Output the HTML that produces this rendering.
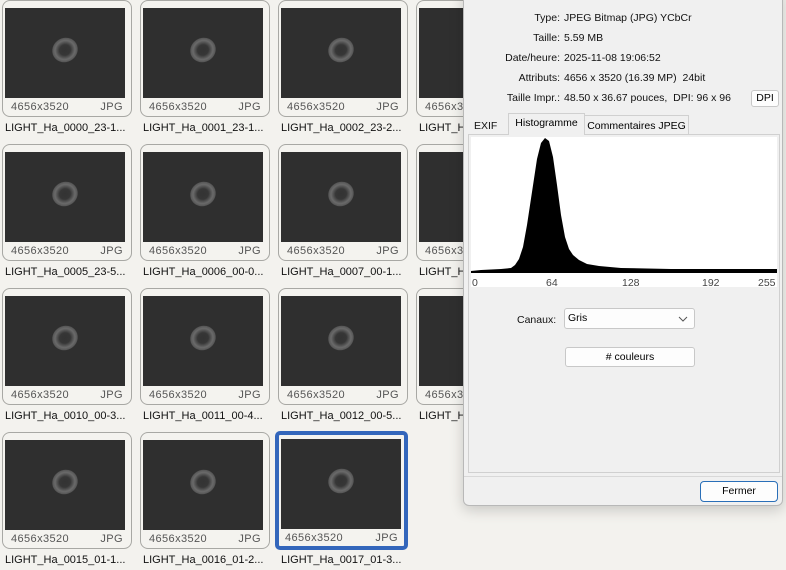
<!DOCTYPE html>
<html><head><meta charset="utf-8"><style>
*{box-sizing:border-box;margin:0;padding:0}
body{width:786px;height:570px;overflow:hidden;background:#f3f2ee;font-family:"Liberation Sans",sans-serif;position:relative}
.tile{position:absolute;width:130px;height:117px;border:1px solid #a8a8a4;border-radius:8px;background:#f4f3ef}
.tile .img{position:absolute;left:2px;top:7px;width:120px;height:90px;background:#2f2f2f;overflow:hidden}
.tile .img::after{content:"";position:absolute;left:47px;top:30px;width:26px;height:24px;border-radius:50%;background:radial-gradient(ellipse at center,#333 0,#363636 30%,#6a6a6a 55%,#4a4a4a 78%,rgba(47,47,47,0) 100%);transform:rotate(-30deg)}
.tile .dim{position:absolute;left:8px;top:100px;font-size:11px;color:#555;letter-spacing:.4px}
.tile .ext{position:absolute;right:8px;top:100px;font-size:11px;color:#555;letter-spacing:.4px}
.name{position:absolute;font-size:11px;color:#111;white-space:nowrap}
.sel{border:4px solid #3366bb;border-radius:5px}
.sel .img{left:2px;top:4px}
.sel .dim{top:97px;left:6px}.sel .ext{top:97px;right:6px}
#dlg{position:absolute;left:463px;top:-10px;width:320px;height:516px;background:#f0f0f0;border:1px solid #b8b8b8;border-radius:0 0 6px 6px;box-shadow:0 4px 14px rgba(0,0,0,.18)}
.lbl{position:absolute;font-size:10.5px;color:#111;white-space:nowrap}
.r{text-align:right;width:96px;left:0}
.v{left:100px}
</style></head><body>
<div class="tile" style="left:2px;top:0"><div class="img"></div><span class="dim">4656x3520</span><span class="ext">JPG</span></div>
<div class="tile" style="left:140px;top:0"><div class="img"></div><span class="dim">4656x3520</span><span class="ext">JPG</span></div>
<div class="tile" style="left:278px;top:0"><div class="img"></div><span class="dim">4656x3520</span><span class="ext">JPG</span></div>
<div class="tile" style="left:416px;top:0"><div class="img"></div><span class="dim">4656x3520</span><span class="ext">JPG</span></div>
<div class="tile" style="left:2px;top:144px"><div class="img"></div><span class="dim">4656x3520</span><span class="ext">JPG</span></div>
<div class="tile" style="left:140px;top:144px"><div class="img"></div><span class="dim">4656x3520</span><span class="ext">JPG</span></div>
<div class="tile" style="left:278px;top:144px"><div class="img"></div><span class="dim">4656x3520</span><span class="ext">JPG</span></div>
<div class="tile" style="left:416px;top:144px"><div class="img"></div><span class="dim">4656x3520</span><span class="ext">JPG</span></div>
<div class="tile" style="left:2px;top:288px"><div class="img"></div><span class="dim">4656x3520</span><span class="ext">JPG</span></div>
<div class="tile" style="left:140px;top:288px"><div class="img"></div><span class="dim">4656x3520</span><span class="ext">JPG</span></div>
<div class="tile" style="left:278px;top:288px"><div class="img"></div><span class="dim">4656x3520</span><span class="ext">JPG</span></div>
<div class="tile" style="left:416px;top:288px"><div class="img"></div><span class="dim">4656x3520</span><span class="ext">JPG</span></div>
<div class="tile" style="left:2px;top:432px"><div class="img"></div><span class="dim">4656x3520</span><span class="ext">JPG</span></div>
<div class="tile" style="left:140px;top:432px"><div class="img"></div><span class="dim">4656x3520</span><span class="ext">JPG</span></div>
<div class="tile sel" style="left:275px;top:431px;width:133px;height:119px"><div class="img"></div><span class="dim">4656x3520</span><span class="ext">JPG</span></div>

<div class="name" style="left:5px;top:122px">LIGHT_Ha_0000_23-1...</div>
<div class="name" style="left:143px;top:122px">LIGHT_Ha_0001_23-1...</div>
<div class="name" style="left:281px;top:122px">LIGHT_Ha_0002_23-2...</div>
<div class="name" style="left:419px;top:122px">LIGHT_Ha</div>
<div class="name" style="left:5px;top:266px">LIGHT_Ha_0005_23-5...</div>
<div class="name" style="left:143px;top:266px">LIGHT_Ha_0006_00-0...</div>
<div class="name" style="left:281px;top:266px">LIGHT_Ha_0007_00-1...</div>
<div class="name" style="left:419px;top:266px">LIGHT_Ha</div>
<div class="name" style="left:5px;top:410px">LIGHT_Ha_0010_00-3...</div>
<div class="name" style="left:143px;top:410px">LIGHT_Ha_0011_00-4...</div>
<div class="name" style="left:281px;top:410px">LIGHT_Ha_0012_00-5...</div>
<div class="name" style="left:419px;top:410px">LIGHT_Ha</div>
<div class="name" style="left:5px;top:554px">LIGHT_Ha_0015_01-1...</div>
<div class="name" style="left:143px;top:554px">LIGHT_Ha_0016_01-2...</div>
<div class="name" style="left:281px;top:554px">LIGHT_Ha_0017_01-3...</div>

<div id="dlg">
  <div class="lbl r" style="top:21px">Type:</div><div class="lbl v" style="top:21px">JPEG Bitmap (JPG) YCbCr</div>
  <div class="lbl r" style="top:41px">Taille:</div><div class="lbl v" style="top:41px">5.59 MB</div>
  <div class="lbl r" style="top:61px">Date/heure:</div><div class="lbl v" style="top:61px">2025-11-08 19:06:52</div>
  <div class="lbl r" style="top:81px">Attributs:</div><div class="lbl v" style="top:81px">4656 x 3520 (16.39 MP)&nbsp; 24bit</div>
  <div class="lbl r" style="top:101px">Taille Impr.:</div><div class="lbl v" style="top:101px">48.50 x 36.67 pouces,&nbsp; DPI: 96 x 96</div>
  <div style="position:absolute;left:287px;top:99px;width:28px;height:17px;border:1px solid #c8c8c8;border-radius:3px;background:#fdfdfd;font-size:10.5px;text-align:center;line-height:15px">DPI</div>
  <div style="position:absolute;left:4px;top:143px;width:312px;height:339px;border:1px solid #d0d0d0;background:#f0f0f0"></div>
  <div class="lbl" style="left:10px;top:129px">EXIF</div>
  <div style="position:absolute;left:44px;top:122px;width:77px;height:22px;border:1px solid #d0d0d0;border-bottom:none;background:#f0f0f0;font-size:10.5px;text-align:center;line-height:19px">Histogramme</div>
  <div style="position:absolute;left:121px;top:124px;width:104px;height:20px;border:1px solid #d0d0d0;border-bottom:none;border-left:none;font-size:10.5px;text-align:center;line-height:20px">Commentaires JPEG</div>
  <div style="position:absolute;left:7px;top:146px;width:306px;height:150px;background:#fff">
    <svg width="306" height="150" style="position:absolute;left:0;top:0">
      <path d="M0 134 L10 133 L30 132 L40 131 L44 128 L48 122 L52 110 L56 88 L61 55 L66 22 L70 6 L74 1 L78 4 L82 20 L86 48 L90 78 L94 100 L98 112 L102 118 L108 123 L116 127 L128 129 L150 131 L200 132 L306 132 L306 136 L0 136Z" fill="#000"/>
      <g font-family="Liberation Sans,sans-serif" font-size="10.5" fill="#444">
        <text x="1" y="149">0</text><text x="75" y="149">64</text><text x="151" y="149">128</text><text x="231" y="149">192</text><text x="287" y="149">255</text>
      </g>
    </svg>
  </div>
  <div class="lbl" style="left:53px;top:323px">Canaux:</div>
  <div style="position:absolute;left:100px;top:317px;width:131px;height:21px;border:1px solid #c8c8c8;border-radius:3px;background:#fdfdfd;font-size:10.5px;line-height:19px;padding-left:3px">Gris<svg width="10" height="6" style="position:absolute;right:6px;top:7px"><path d="M1 1 L5 5 L9 1" stroke="#555" fill="none"/></svg></div>
  <div style="position:absolute;left:101px;top:356px;width:130px;height:20px;border:1px solid #c8c8c8;border-radius:3px;background:#fdfdfd;font-size:10.5px;text-align:center;line-height:18px"># couleurs</div>
  <div style="position:absolute;left:0;top:485px;width:318px;height:1px;background:#d8d8d8"></div>
  <div style="position:absolute;left:236px;top:490px;width:78px;height:21px;border:1px solid #2a6fb8;border-radius:4px;background:#fdfdfd;font-size:10.5px;text-align:center;line-height:19px">Fermer</div>
</div>
</body></html>
